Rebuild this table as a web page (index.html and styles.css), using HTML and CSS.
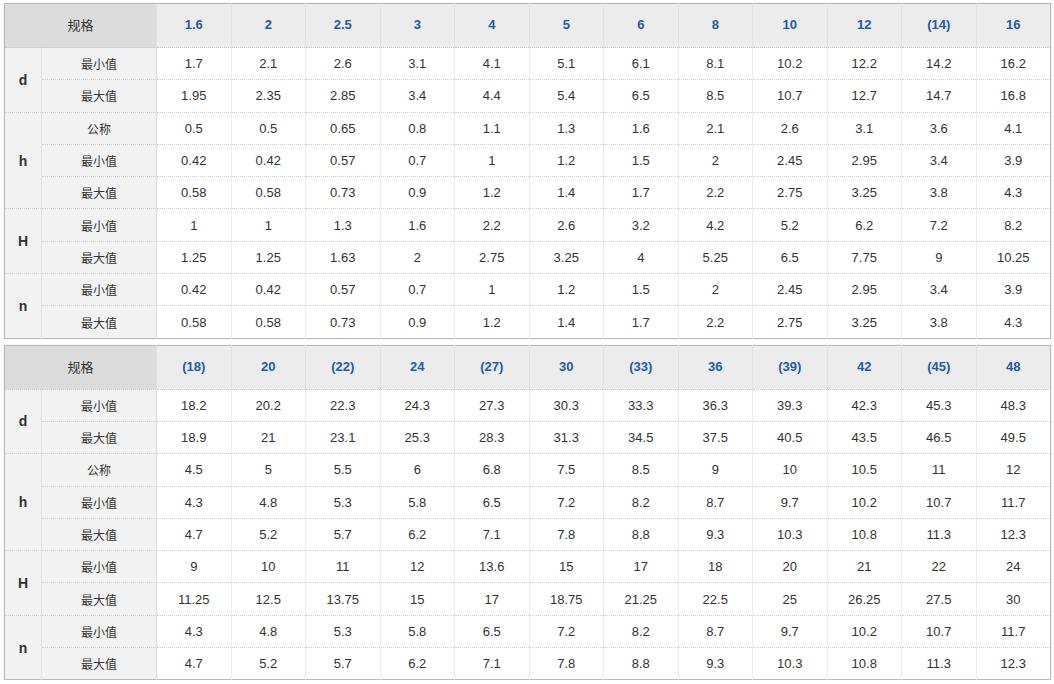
FILE: index.html
```html
<!DOCTYPE html>
<html lang="zh">
<head>
<meta charset="utf-8">
<title>规格表</title>
<link rel="stylesheet" href="styles.css">
</head>
<body>
<div class="page">
<table class="spec">
<colgroup><col class="c-grp"><col class="c-sub"><col span="12" class="c-val"></colgroup>
<thead>
<tr><th colspan="2" class="h-label">规格</th><th>1.6</th><th>2</th><th>2.5</th><th>3</th><th>4</th><th>5</th><th>6</th><th>8</th><th>10</th><th>12</th><th>(14)</th><th>16</th></tr>
</thead>
<tbody>
<tr class="g-start"><td rowspan="2" class="grp">d</td><td class="sub">最小值</td><td>1.7</td><td>2.1</td><td>2.6</td><td>3.1</td><td>4.1</td><td>5.1</td><td>6.1</td><td>8.1</td><td>10.2</td><td>12.2</td><td>14.2</td><td>16.2</td></tr>
<tr><td class="sub">最大值</td><td>1.95</td><td>2.35</td><td>2.85</td><td>3.4</td><td>4.4</td><td>5.4</td><td>6.5</td><td>8.5</td><td>10.7</td><td>12.7</td><td>14.7</td><td>16.8</td></tr>
<tr class="g-start"><td rowspan="3" class="grp">h</td><td class="sub">公称</td><td>0.5</td><td>0.5</td><td>0.65</td><td>0.8</td><td>1.1</td><td>1.3</td><td>1.6</td><td>2.1</td><td>2.6</td><td>3.1</td><td>3.6</td><td>4.1</td></tr>
<tr><td class="sub">最小值</td><td>0.42</td><td>0.42</td><td>0.57</td><td>0.7</td><td>1</td><td>1.2</td><td>1.5</td><td>2</td><td>2.45</td><td>2.95</td><td>3.4</td><td>3.9</td></tr>
<tr><td class="sub">最大值</td><td>0.58</td><td>0.58</td><td>0.73</td><td>0.9</td><td>1.2</td><td>1.4</td><td>1.7</td><td>2.2</td><td>2.75</td><td>3.25</td><td>3.8</td><td>4.3</td></tr>
<tr class="g-start"><td rowspan="2" class="grp">H</td><td class="sub">最小值</td><td>1</td><td>1</td><td>1.3</td><td>1.6</td><td>2.2</td><td>2.6</td><td>3.2</td><td>4.2</td><td>5.2</td><td>6.2</td><td>7.2</td><td>8.2</td></tr>
<tr><td class="sub">最大值</td><td>1.25</td><td>1.25</td><td>1.63</td><td>2</td><td>2.75</td><td>3.25</td><td>4</td><td>5.25</td><td>6.5</td><td>7.75</td><td>9</td><td>10.25</td></tr>
<tr class="g-start"><td rowspan="2" class="grp">n</td><td class="sub">最小值</td><td>0.42</td><td>0.42</td><td>0.57</td><td>0.7</td><td>1</td><td>1.2</td><td>1.5</td><td>2</td><td>2.45</td><td>2.95</td><td>3.4</td><td>3.9</td></tr>
<tr><td class="sub">最大值</td><td>0.58</td><td>0.58</td><td>0.73</td><td>0.9</td><td>1.2</td><td>1.4</td><td>1.7</td><td>2.2</td><td>2.75</td><td>3.25</td><td>3.8</td><td>4.3</td></tr>
</tbody>
</table>

<table class="spec">
<colgroup><col class="c-grp"><col class="c-sub"><col span="12" class="c-val"></colgroup>
<thead>
<tr><th colspan="2" class="h-label">规格</th><th>(18)</th><th>20</th><th>(22)</th><th>24</th><th>(27)</th><th>30</th><th>(33)</th><th>36</th><th>(39)</th><th>42</th><th>(45)</th><th>48</th></tr>
</thead>
<tbody>
<tr class="g-start"><td rowspan="2" class="grp">d</td><td class="sub">最小值</td><td>18.2</td><td>20.2</td><td>22.3</td><td>24.3</td><td>27.3</td><td>30.3</td><td>33.3</td><td>36.3</td><td>39.3</td><td>42.3</td><td>45.3</td><td>48.3</td></tr>
<tr><td class="sub">最大值</td><td>18.9</td><td>21</td><td>23.1</td><td>25.3</td><td>28.3</td><td>31.3</td><td>34.5</td><td>37.5</td><td>40.5</td><td>43.5</td><td>46.5</td><td>49.5</td></tr>
<tr class="g-start"><td rowspan="3" class="grp">h</td><td class="sub">公称</td><td>4.5</td><td>5</td><td>5.5</td><td>6</td><td>6.8</td><td>7.5</td><td>8.5</td><td>9</td><td>10</td><td>10.5</td><td>11</td><td>12</td></tr>
<tr><td class="sub">最小值</td><td>4.3</td><td>4.8</td><td>5.3</td><td>5.8</td><td>6.5</td><td>7.2</td><td>8.2</td><td>8.7</td><td>9.7</td><td>10.2</td><td>10.7</td><td>11.7</td></tr>
<tr><td class="sub">最大值</td><td>4.7</td><td>5.2</td><td>5.7</td><td>6.2</td><td>7.1</td><td>7.8</td><td>8.8</td><td>9.3</td><td>10.3</td><td>10.8</td><td>11.3</td><td>12.3</td></tr>
<tr class="g-start"><td rowspan="2" class="grp">H</td><td class="sub">最小值</td><td>9</td><td>10</td><td>11</td><td>12</td><td>13.6</td><td>15</td><td>17</td><td>18</td><td>20</td><td>21</td><td>22</td><td>24</td></tr>
<tr><td class="sub">最大值</td><td>11.25</td><td>12.5</td><td>13.75</td><td>15</td><td>17</td><td>18.75</td><td>21.25</td><td>22.5</td><td>25</td><td>26.25</td><td>27.5</td><td>30</td></tr>
<tr class="g-start"><td rowspan="2" class="grp">n</td><td class="sub">最小值</td><td>4.3</td><td>4.8</td><td>5.3</td><td>5.8</td><td>6.5</td><td>7.2</td><td>8.2</td><td>8.7</td><td>9.7</td><td>10.2</td><td>10.7</td><td>11.7</td></tr>
<tr><td class="sub">最大值</td><td>4.7</td><td>5.2</td><td>5.7</td><td>6.2</td><td>7.1</td><td>7.8</td><td>8.8</td><td>9.3</td><td>10.3</td><td>10.8</td><td>11.3</td><td>12.3</td></tr>
</tbody>
</table>
</div>
</body>
</html>
```

FILE: styles.css
```css
html, body {
  margin: 0;
  padding: 0;
  background: #ffffff;
}

.page {
  padding: 3px 4px 0 4px;
  display: flex;
  flex-direction: column;
  gap: 6px;
  font-family: "Liberation Sans", Arial, "Noto Sans CJK SC", sans-serif;
  color: #333333;
}

.spec {
  width: 1046px;
  table-layout: fixed;
  border-collapse: collapse;
  border: 1px solid #b9b9b9;
  box-shadow: 0 0 1px #c8c8c8;
  font-size: 13px;
}

.c-grp { width: 37px; }
.c-sub { width: 115px; }
.c-val { width: 74.5px; }

.spec th {
  height: 41px;
  padding: 0 0 2px 0;
  background: #ececec;
  color: #1f5ba6;
  font-weight: bold;
  font-size: 13px;
  text-align: center;
  border-left: 1px solid #e2e2e2;
  border-bottom: 1px dotted #c9c9c9;
}

.spec th.h-label {
  background: #dcdcdc;
  color: #333333;
  font-weight: normal;
  font-family: "Noto Sans CJK SC", "Liberation Sans", sans-serif;
  font-size: 13px;
  border-left: none;
}

.spec td {
  height: 31.3px;
  padding: 0;
  text-align: center;
  background: #ffffff;
  border-left: 1px solid #ececec;
  border-top: 1px dotted #cfcfcf;
}

.spec td.grp {
  background: #f2f2f2;
  font-weight: bold;
  font-size: 14px;
  color: #333333;
  border-left: none;
  border-right: 1px solid #e4e4e4;
}

.spec td.sub {
  background: #f2f2f2;
  font-family: "Noto Sans CJK SC", "Liberation Sans", sans-serif;
  font-size: 12px;
  border-left: 1px solid #e4e4e4;
  border-right: 1px solid #dcdcdc;
}
```
